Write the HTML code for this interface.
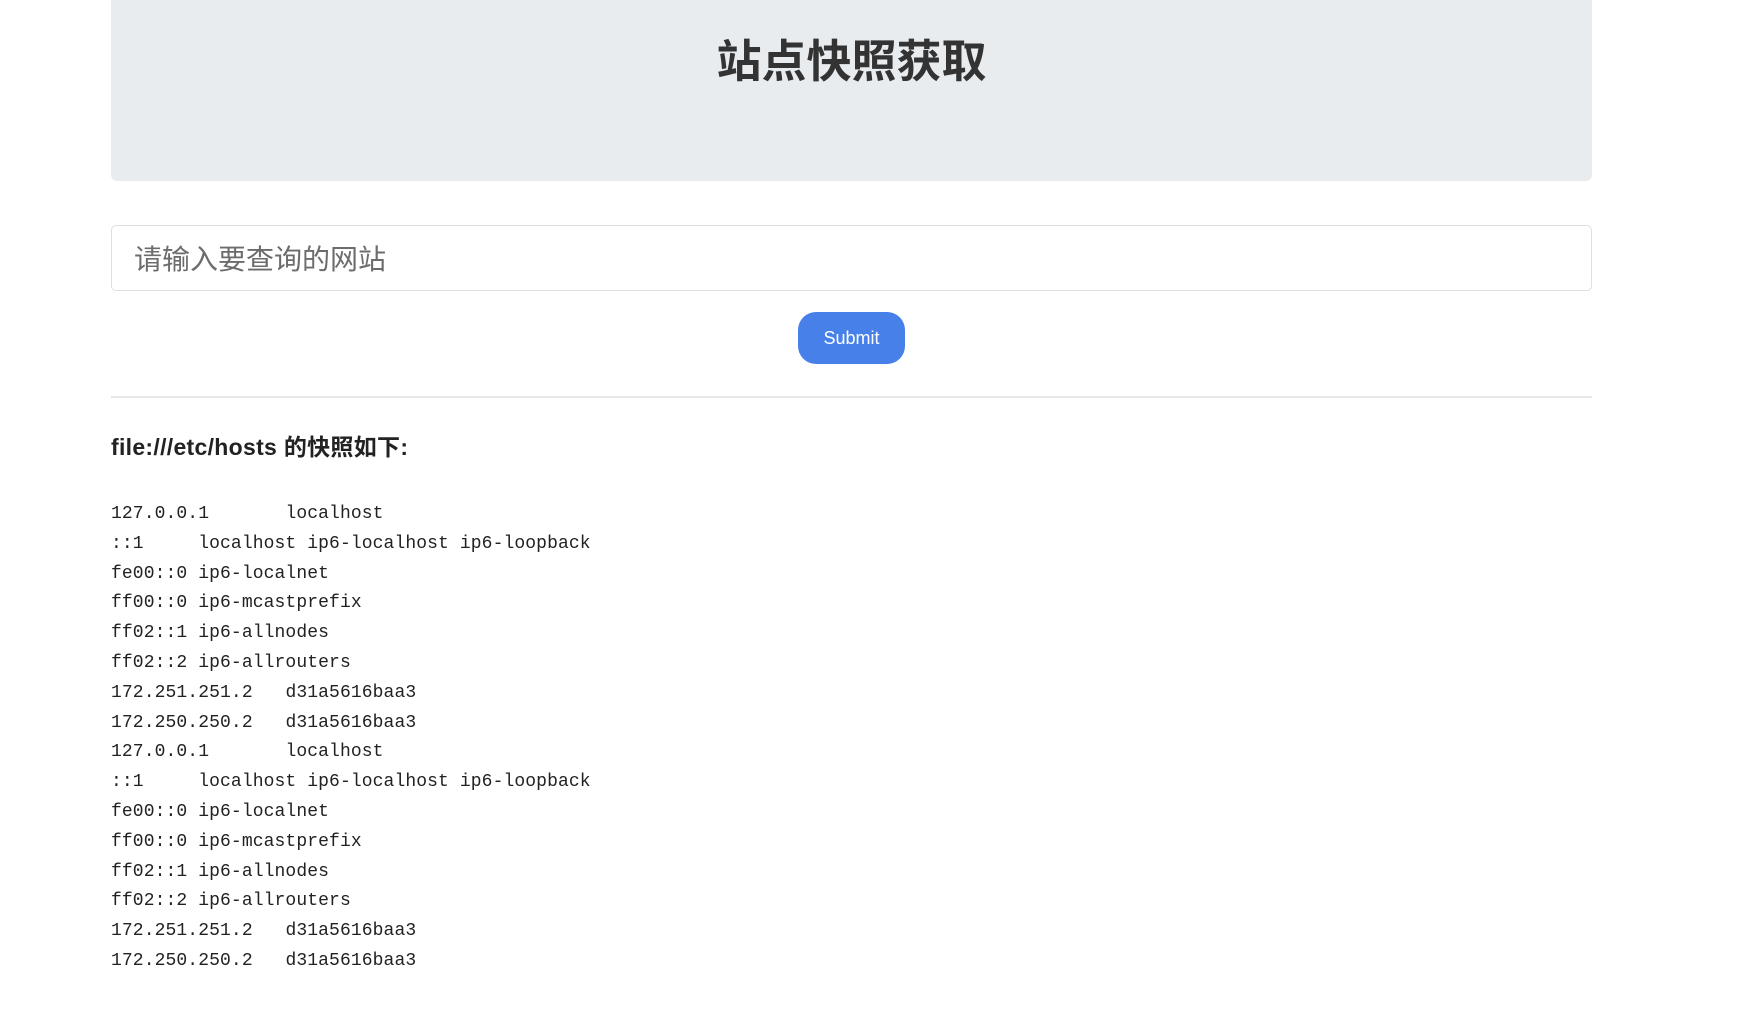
<!DOCTYPE html>
<html><head><meta charset="utf-8"><style>
body{margin:0;background:#fff;width:1740px;height:1018px;overflow:hidden;font-family:"Liberation Sans","Noto Sans CJK SC",sans-serif;color:#212529}
.j{position:absolute;left:111px;width:1481px;top:-10px;height:191px;background:#e9ecef;border-radius:6px}
h1{position:absolute;left:0;right:0;top:40px;margin:0;text-align:center;font-size:45px;line-height:56px;font-weight:bold;color:#333;font-family:"Noto Sans CJK SC",sans-serif}
.in{position:absolute;left:111px;top:225px;width:1479px;height:64px;border:1px solid #dcdfe3;border-radius:5px;box-sizing:content-box}
.in span{position:absolute;left:22px;top:14px;font-size:28px;line-height:36px;color:#6c6c6c;font-family:"Noto Sans CJK SC",sans-serif}
.btn{position:absolute;left:798px;top:312px;width:107px;height:52px;border-radius:18px;background:#4680e8;color:#fff;font-size:18px;line-height:52px;text-align:center}
hr{position:absolute;left:111px;width:1481px;top:396px;margin:0;border:0;border-top:2px solid #e5e7ea}
.h{position:absolute;left:111px;top:432px;font-size:23px;line-height:30px;font-weight:bold;color:#222;letter-spacing:0.3px}
pre{position:absolute;left:111px;top:500px;margin:0;font-family:"Liberation Mono",monospace;font-size:18px;letter-spacing:0.1px;line-height:29.8px;color:#222;tab-size:8}
</style></head><body>
<div class="j"><h1>站点快照获取</h1></div>
<div class="in"><span>请输入要查询的网站</span></div>
<div class="btn">Submit</div>
<hr>
<div class="h">file:///etc/hosts 的快照如下:</div>
<pre>127.0.0.1	localhost
::1	localhost ip6-localhost ip6-loopback
fe00::0	ip6-localnet
ff00::0	ip6-mcastprefix
ff02::1	ip6-allnodes
ff02::2	ip6-allrouters
172.251.251.2	d31a5616baa3
172.250.250.2	d31a5616baa3
127.0.0.1	localhost
::1	localhost ip6-localhost ip6-loopback
fe00::0	ip6-localnet
ff00::0	ip6-mcastprefix
ff02::1	ip6-allnodes
ff02::2	ip6-allrouters
172.251.251.2	d31a5616baa3
172.250.250.2	d31a5616baa3</pre>
</body></html>
